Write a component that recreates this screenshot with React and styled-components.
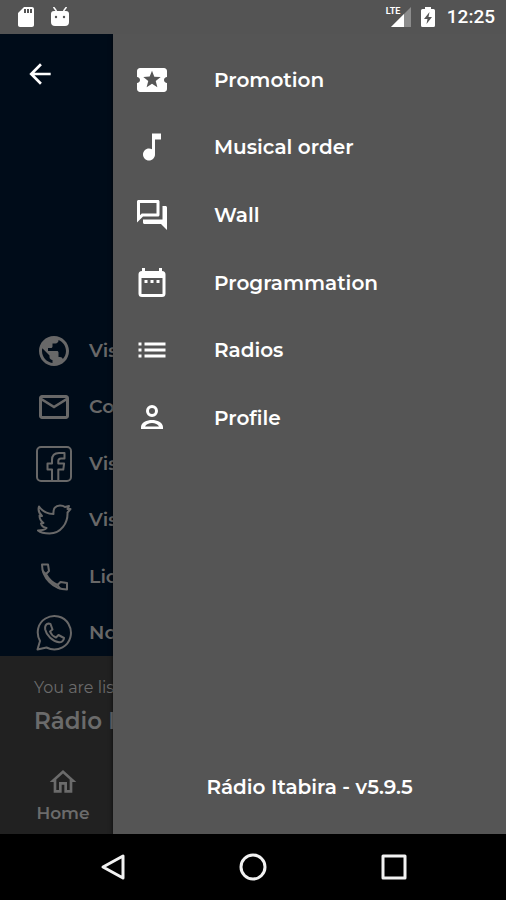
import React from 'react';
import styled, { createGlobalStyle } from 'styled-components';
import {
  MdArrowBack, MdLocalActivity, MdMusicNote, MdOutlineForum, MdList,
  MdPublic, MdMailOutline, MdOutlineHome, MdSdCard,
} from 'react-icons/md';

const GlobalStyle = createGlobalStyle`
  * { box-sizing: border-box; }
  body { margin: 0; background: #000; }
  button { border: 0; padding: 0; background: none; color: inherit; font: inherit; cursor: pointer; }
  a { color: inherit; text-decoration: none; }
  ul { list-style: none; margin: 0; padding: 0; }
  p, h2 { margin: 0; }
  svg { display: block; flex: none; }
`;

const Screen = styled.div`
  display: flex;
  flex-direction: column;
  min-height: 100vh;
  font-family: Montserrat, Inter, sans-serif;
  font-weight: 600;
  color: #fff;
`;

const StatusBar = styled.header`
  display: flex;
  align-items: center;
  justify-content: space-between;
  height: 34px;
  padding: 0 11px 0 14px;
  background: #545454;
`;

const StatusGroup = styled.div`
  display: flex;
  align-items: center;
  gap: ${({ $gap }) => $gap}px;
`;

const Signal = styled.div`
  position: relative;
  width: 25px;
  height: 20px;
`;

const NetworkLabel = styled.span`
  position: absolute;
  left: 0;
  top: 0;
  font: 700 9px/9px Roboto, sans-serif;
`;

const SignalBars = styled.svg`
  margin-left: 5px;
`;

const Clock = styled.time`
  margin-left: 2px;
  font: 500 19px/24px Roboto, sans-serif;
`;

const Body = styled.main`
  position: relative;
  display: flex;
  flex-direction: column;
  flex: 1;
  overflow: hidden;
`;

const Page = styled.section`
  display: flex;
  flex-direction: column;
  justify-content: space-between;
  flex: 1;
  padding: 24px 24px 5px;
  background: #000c19;
`;

const BackButton = styled.button`
  display: flex;
  width: 32px;
  height: 32px;
`;

const LinkList = styled.ul`
  display: flex;
  flex-direction: column;
  justify-content: space-between;
  height: 318px;
  padding-left: 12px;
`;

const ContactLink = styled.a`
  display: flex;
  align-items: center;
  gap: 17px;
  height: 36px;
  color: #686868;
  font-size: 19px;
  line-height: 24px;
  white-space: nowrap;
`;

const IconSlot = styled.span`
  display: grid;
  place-items: center;
  width: 36px;
  height: 36px;
`;

const Player = styled.section`
  display: flex;
  flex-direction: column;
  align-items: flex-start;
  height: 178px;
  padding: 21px 34px 0;
  background: #212121;
  color: #6b6b6b;
`;

const Caption = styled.p`
  font-size: 16px;
  line-height: 22px;
  font-weight: 400;
`;

const Station = styled.h2`
  font-size: 23px;
  line-height: 28px;
  font-weight: 600;
  margin-top: 8px;
`;

const HomeTab = styled.a`
  display: flex;
  flex-direction: column;
  align-items: center;
  min-width: 58px;
  margin-top: 31px;
  font-size: 17px;
  line-height: 24px;
  gap: 3px;
`;

const Drawer = styled.aside`
  position: absolute;
  top: 0;
  bottom: 0;
  right: 0;
  left: 113px;
  display: flex;
  flex-direction: column;
  justify-content: space-between;
  padding: 12px 0 35px;
  background: #555;
  box-shadow: 0 2px 4px rgba(0, 0, 0, 0.7);
`;

const Menu = styled.ul`
  display: grid;
  grid-template-rows: repeat(6, 1fr);
  height: 406px;
`;

const MenuItem = styled.button`
  display: flex;
  align-items: center;
  gap: 44px;
  width: 100%;
  height: 100%;
  padding-left: 21px;
  font-size: 20px;
  line-height: 24px;
  text-align: left;
`;

const Version = styled.p`
  text-align: center;
  font-size: 20px;
  line-height: 24px;
`;

const SystemBar = styled.nav`
  display: flex;
  align-items: center;
  justify-content: center;
  gap: 105px;
  height: 66px;
  background: #000;
  color: #f2f2f2;
`;

const SystemButton = styled.button`
  display: grid;
  place-items: center;
  width: 36px;
  height: 36px;
`;

const Stroke = ({ width = 36, height = 36, weight = 2, children }) => (
  <svg width={width} height={height} viewBox={`0 0 ${width} ${height}`} fill="none"
    stroke="currentColor" strokeWidth={weight} strokeLinecap="round" strokeLinejoin="round" aria-hidden="true">
    {children}
  </svg>
);

const FacebookIcon = () => (
  <Stroke>
    <rect x="1" y="1" width="34" height="34" rx="4" />
    <path d="M16 35V23.5h-4.5v-6H16V14c0-4.5 2.8-7 7-7h5.5v5.5H25c-2 0-2.7.8-2.7 2.5v2.5h5.8l-.8 6h-5V35" />
  </Stroke>
);

const TwitterIcon = () => (
  <Stroke>
    <path d="M3 4.500C6.500 9.500 11 12 17.500 12C17 6.500 19.500 3.500 24 3.500C26.500 3.500 28 4.200 29 5L33 4L31.500 7L34.500 7L31.500 10.500C32 21 25 31.500 13.500 31.500C9 31.500 5 31 2 28.500C5.500 28.500 8.500 28 10.500 26C7.500 25.500 5.500 23.500 5 21.500L7.500 21C4.500 19 3.500 16.500 3.500 13.500L6 14C2.800 11 2 7.500 3 4.500Z" />
  </Stroke>
);

const PhoneIcon = () => (
  <Stroke>
    <path d="M6 5.500H12L13 12L10 15C12.500 20 16 23.500 21.500 26L24.500 23L31 24V30.500C17.500 30.500 6 19 6 5.500Z" />
    <path d="M7 12.500L10 15M21.500 26L24 29.500" />
  </Stroke>
);

const WhatsappIcon = () => (
  <Stroke>
    <path d="M1.500 34.500L4 26C-.5 17.500 2 8 9.500 3.500C17.500-1 28 1 32.500 9C37.500 17.500 34.500 28 26.500 32.300C21.500 35 15.500 35 10.500 32.500Z" />
    <path d="M12.500 8.500C10 9 8.800 11.500 9.200 14.500C10.500 20.500 16.500 26.500 23 27.300C25.500 27.500 28 25.500 28 23L22.500 20L20 22.500C17.500 21.500 15 19 14 16.500L16.500 14.500L14.500 9Z" />
  </Stroke>
);

const CalendarIcon = () => (
  <svg width="36" height="36" viewBox="0 0 36 36" fill="currentColor" aria-hidden="true">
    <path fillRule="evenodd" d="M8 3h3v3h14V3h3v3q3.500 0 3.500 3.500v19q0 3.500-3.500 3.500H8q-3.500 0-3.500-3.500v-19Q4.500 6 8 6ZM7.500 13v16h21V13Z" />
    <path d="M10.500 15h3v3h-3ZM16.500 15h3v3h-3ZM22.500 15h3v3h-3Z" />
  </svg>
);

const ProfileIcon = () => (
  <svg width="36" height="36" viewBox="0 0 36 36" aria-hidden="true">
    <circle cx="18" cy="11" r="4.500" fill="none" stroke="currentColor" strokeWidth="3" />
    <path fill="currentColor" fillRule="evenodd" d="M7 29V27C7 22.500 13 20 18 20S29 22.500 29 27V29ZM11 26.500H25C24 24.300 21 23 18 23S12 24.300 11 26.500Z" />
  </svg>
);

const AndroidHead = () => (
  <svg width="18" height="20" viewBox="0 0 18 20" fill="currentColor" aria-hidden="true">
    <path d="M2.500 0L5.500 4M15.500 0L12.500 4" stroke="currentColor" strokeWidth="1.500" />
    <path d="M3 4h12q3 0 3 3v8q0 4-4 4H4q-4 0-4-4V7q0-3 3-3Z" />
    <circle cx="5" cy="10" r="1.200" fill="#545454" />
    <circle cx="13" cy="10" r="1.200" fill="#545454" />
  </svg>
);

const contacts = [
  ['Vis', <MdPublic size={36} />],
  ['Co', <MdMailOutline size={36} />],
  ['Vis', <FacebookIcon />],
  ['Vis', <TwitterIcon />],
  ['Lic', <PhoneIcon />],
  ['No', <WhatsappIcon />],
];

const menu = [
  ['Promotion', <MdLocalActivity size={36} />],
  ['Musical order', <MdMusicNote size={36} />],
  ['Wall', <MdOutlineForum size={36} />],
  ['Programmation', <CalendarIcon />],
  ['Radios', <MdList size={36} />],
  ['Profile', <ProfileIcon />],
];

export default function App() {
  return (
    <>
      <GlobalStyle />
      <Screen>
        <StatusBar>
          <StatusGroup $gap={13}>
            <MdSdCard size={24} />
            <AndroidHead />
          </StatusGroup>
          <StatusGroup $gap={10}>
            <Signal>
              <NetworkLabel>LTE</NetworkLabel>
              <SignalBars width="20" height="20" viewBox="0 0 20 20" aria-hidden="true">
                <path d="M20 0V20H0Z" fill="#8c8c8c" />
                <path d="M13 7V20H0Z" fill="#fff" />
              </SignalBars>
            </Signal>
            <svg width="14" height="20" viewBox="0 0 14 20" aria-hidden="true">
              <path d="M4 0h6v2h2.500q1.500 0 1.500 1.500v15q0 1.500-1.500 1.500h-11Q0 20 0 18.500v-15Q0 2 1.500 2H4Z" fill="#fff" />
              <path d="M8.500 5L3 12h3.500L5.500 17L11 10H7.500Z" fill="#545454" />
            </svg>
            <Clock>12:25</Clock>
          </StatusGroup>
        </StatusBar>
        <Body>
          <Page>
            <BackButton aria-label="Back"><MdArrowBack size={32} /></BackButton>
            <LinkList>
              {contacts.map(([label, icon], i) => (
                <li key={i}>
                  <ContactLink href="#"><IconSlot>{icon}</IconSlot>{label}</ContactLink>
                </li>
              ))}
            </LinkList>
          </Page>
          <Player>
            <Caption>You are listening</Caption>
            <Station>Rádio Itabira</Station>
            <HomeTab href="#"><MdOutlineHome size={32} />Home</HomeTab>
          </Player>
          <Drawer>
            <Menu>
              {menu.map(([label, icon]) => (
                <li key={label}>
                  <MenuItem><IconSlot>{icon}</IconSlot>{label}</MenuItem>
                </li>
              ))}
            </Menu>
            <Version>Rádio Itabira - v5.9.5</Version>
          </Drawer>
        </Body>
        <SystemBar>
          <SystemButton aria-label="System back">
            <Stroke width={28} height={28} weight={3}><path d="M25 3V25L5 14Z" /></Stroke>
          </SystemButton>
          <SystemButton aria-label="System home">
            <Stroke width={28} height={28} weight={3}><circle cx="14" cy="14" r="12" /></Stroke>
          </SystemButton>
          <SystemButton aria-label="Recent apps">
            <Stroke width={28} height={28} weight={3}><rect x="3" y="3" width="22" height="22" /></Stroke>
          </SystemButton>
        </SystemBar>
      </Screen>
    </>
  );
}
